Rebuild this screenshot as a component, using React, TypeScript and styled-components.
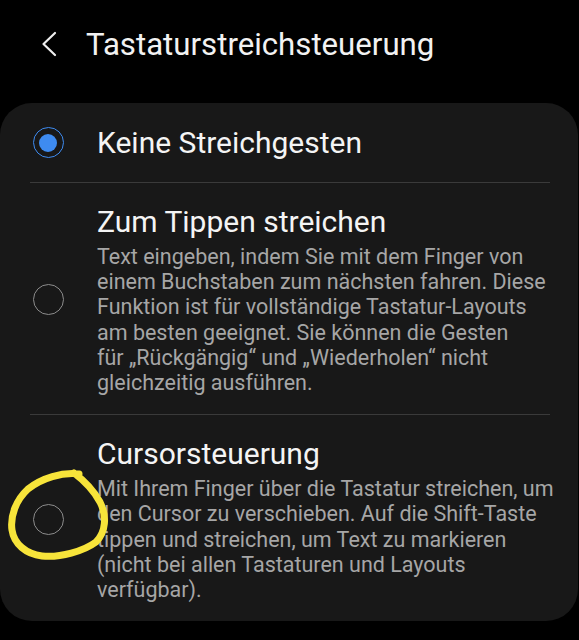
import React from "react";
import styled, { createGlobalStyle } from "styled-components";

const Global = createGlobalStyle`
  html, body { margin: 0; padding: 0; background: #000; }
  body { font-family: Roboto, "Noto Sans", "Liberation Sans", sans-serif; -webkit-font-smoothing: antialiased; }
`;

const Page = styled.div`
  width: 579px;
  height: 640px;
  background: #000;
  overflow: hidden;
  display: flex;
  flex-direction: column;
`;

const Header = styled.header`
  height: 88px;
  display: flex;
  align-items: center;
  padding-left: 40px;
  gap: 28px;
  box-sizing: border-box;
`;

const Title = styled.h1`
  margin: 0;
  font-size: 31.2px;
  font-weight: 400;
  color: #f2f2f2;
  letter-spacing: 0;
`;

const Card = styled.section`
  margin: 15px 1px 0 0;
  background: #181818;
  border-radius: 32px;
  padding: 0 28px 0 30px;
  display: flex;
  flex-direction: column;
`;

const Option = styled.div<{ $pt: number; $pb: number; $divider?: boolean }>`
  display: flex;
  align-items: center;
  padding: ${(p) => `${p.$pt}px 0 ${p.$pb}px`};
  border-top: ${(p) => (p.$divider ? "1px solid #3a3a3a" : "none")};
`;

const SimpleRow = styled.div`
  height: 79px;
  display: flex;
  align-items: center;
`;

const RadioBox = styled.div`
  position: relative;
  width: 36px;
  flex: none;
  display: flex;
  justify-content: center;
  margin-right: 31px;
`;

const Radio = styled.span<{ $on?: boolean }>`
  box-sizing: border-box;
  width: 31px;
  height: 31px;
  border-radius: 50%;
  border: 1.5px solid ${(p) => (p.$on ? "#3e8bf0" : "#8c8c8c")};
  display: flex;
  align-items: center;
  justify-content: center;
  &::after {
    content: "";
    display: ${(p) => (p.$on ? "block" : "none")};
    width: 18px;
    height: 18px;
    border-radius: 50%;
    background: #3e8bf0;
  }
`;

const TextCol = styled.div`
  display: flex;
  flex-direction: column;
  min-width: 0;
`;

const Label = styled.div`
  font-size: 30px;
  line-height: 36px;
  color: #f4f4f4;
  white-space: nowrap;
`;

const Desc = styled.div`
  margin-top: 4px;
  font-size: 21.5px;
  line-height: 25.2px;
  color: #a6a6a6;
  white-space: nowrap;
`;

const Marker = styled.svg`
  position: absolute;
  left: -30px;
  top: -40px;
  pointer-events: none;
`;

export default function App() {
  return (
    <Page>
      <Global />
      <Header>
        <svg width="18" height="26" viewBox="0 0 18 26">
          <path d="M15 2 L3.5 13 L15 24" fill="none" stroke="#eee" strokeWidth="2.2" strokeLinecap="round" strokeLinejoin="round" />
        </svg>
        <Title>Tastaturstreichsteuerung</Title>
      </Header>
      <Card>
        <Option $pt={0} $pb={0}>
          <SimpleRow>
            <RadioBox>
              <Radio $on />
            </RadioBox>
            <Label>Keine Streichgesten</Label>
          </SimpleRow>
        </Option>
        <Option $pt={21} $pb={19} $divider>
          <RadioBox>
            <Radio />
          </RadioBox>
          <TextCol>
            <Label>Zum Tippen streichen</Label>
            <Desc>
              Text eingeben, indem Sie mit dem Finger von
              <br />
              einem Buchstaben zum nächsten fahren. Diese
              <br />
              Funktion ist für vollständige Tastatur-Layouts
              <br />
              am besten geeignet. Sie können die Gesten
              <br />
              für „Rückgängig“ und „Wiederholen“ nicht
              <br />
              gleichzeitig ausführen.
            </Desc>
          </TextCol>
        </Option>
        <Option $pt={21} $pb={19} $divider>
          <RadioBox>
            <Radio />
            <Marker width="130" height="110" viewBox="0 0 130 110">
              <path
                d="M79 10 C 62 8, 42 14, 28 25 C 16 36, 10 52, 12 66 C 14 80, 26 90, 42 92 C 60 94, 84 87, 96 78 C 106 68, 107 52, 100 38 C 94 27, 86 18, 74 9"
                fill="none"
                stroke="#f7e43a"
                strokeWidth="7"
                strokeLinecap="round"
                strokeLinejoin="round"
              />
            </Marker>
          </RadioBox>
          <TextCol>
            <Label>Cursorsteuerung</Label>
            <Desc>
              Mit Ihrem Finger über die Tastatur streichen, um
              <br />
              den Cursor zu verschieben. Auf die Shift-Taste
              <br />
              tippen und streichen, um Text zu markieren
              <br />
              (nicht bei allen Tastaturen und Layouts
              <br />
              verfügbar).
            </Desc>
          </TextCol>
        </Option>
      </Card>
    </Page>
  );
}
